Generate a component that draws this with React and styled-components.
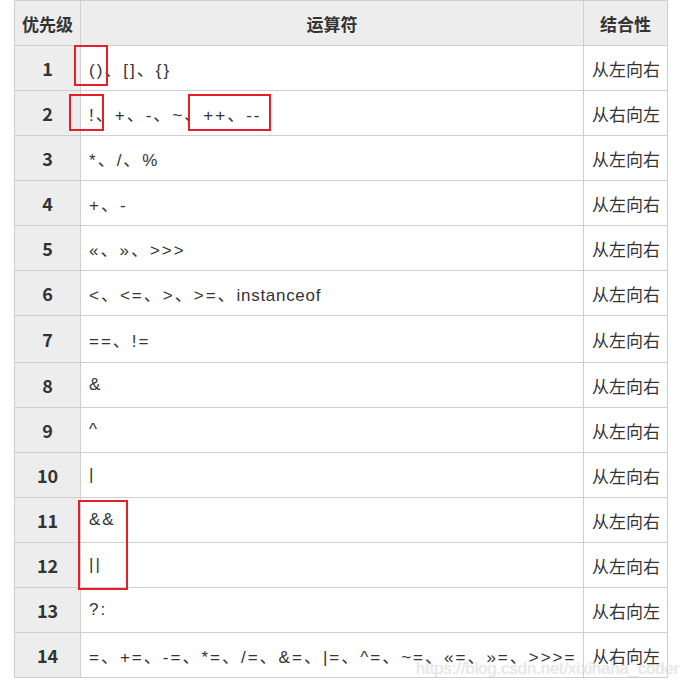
import React from 'react';
import styled, { createGlobalStyle } from 'styled-components';

const GlobalStyle = createGlobalStyle`
  html, body {
    margin: 0;
    padding: 0;
    background: #fff;
  }
  body {
    font-family: "Noto Sans CJK SC", "Noto Sans", sans-serif;
    color: #333;
  }
`;

const Page = styled.div`
  position: relative;
  width: 680px;
  height: 686px;
  padding-left: 14px;
  box-sizing: border-box;
  overflow: hidden;
`;

const Table = styled.table`
  border-collapse: collapse;
  width: 654px;
  table-layout: fixed;
  font-size: 17px;
`;

const HeadCell = styled.th`
  height: 44px;
  padding: 0;
  background: #ededed;
  border: 1px solid #cfcfcf;
  font-weight: bold;
  color: #333;
  text-align: center;
  width: ${p => p.w}px;
`;

const RankCell = styled.td`
  height: ${p => p.h - 1}px;
  padding: 0;
  background: #ededed;
  border: 1px solid #cfcfcf;
  font-weight: bold;
  font-size: 18px;
  color: #333;
  text-align: center;
`;

const OpCell = styled.td`
  height: ${p => p.h - 1}px;
  padding: 0 0 0 8px;
  border: 1px solid #cfcfcf;
  color: #333;
  font-family: "Liberation Sans", "Noto Sans CJK SC", sans-serif;
  letter-spacing: 2px;
  white-space: nowrap;
  overflow: visible;
`;

const Word = styled.span`
  letter-spacing: 0.7px;
`;

const AssocCell = styled.td`
  height: ${p => p.h - 1}px;
  padding: 0 0 0 8px;
  border: 1px solid #cfcfcf;
  color: #333;
  white-space: nowrap;
`;

const Mark = styled.div`
  position: absolute;
  left: ${p => p.x}px;
  top: ${p => p.y}px;
  width: ${p => p.w}px;
  height: ${p => p.h}px;
  border: 2px solid #e61e28;
  box-sizing: border-box;
  pointer-events: none;
`;

const Watermark = styled.div`
  position: absolute;
  left: 416px;
  top: 659px;
  font-family: "Liberation Sans", Arial, sans-serif;
  font-size: 16.5px;
  color: rgba(235, 235, 235, 0.75);
  text-shadow: 0 0 1px rgba(180, 180, 180, 0.5);
  white-space: nowrap;
`;

const rows = [
  ['1', ['()', '[]', '{}'], '从左向右'],
  ['2', ['!', '+', '-', '~', '++', '--'], '从右向左'],
  ['3', ['*', '/', '%'], '从左向右'],
  ['4', ['+', '-'], '从左向右'],
  ['5', ['«', '»', '>>>'], '从左向右'],
  ['6', ['<', '<=', '>', '>=', 'instanceof'], '从左向右'],
  ['7', ['==', '!='], '从左向右', 47],
  ['8', ['&'], '从左向右'],
  ['9', ['^'], '从左向右'],
  ['10', ['|'], '从左向右'],
  ['11', ['&&'], '从左向右'],
  ['12', ['||'], '从左向右'],
  ['13', ['?:'], '从右向左'],
  ['14', ['=', '+=', '-=', '*=', '/=', '&=', '|=', '^=', '~=', '«=', '»=', '>>>='], '从右向左'],
];

const marks = [
  { x: 74, y: 45, w: 34, h: 41 },
  { x: 69, y: 94, w: 35, h: 37 },
  { x: 188, y: 94, w: 83, h: 37 },
  { x: 78, y: 500, w: 50, h: 90 },
];

const OpList = ({ ops }) =>
  ops.map((op, i) => (
    <React.Fragment key={i}>
      {i > 0 && '、'}
      {/^[a-z]+$/.test(op) ? <Word>{op}</Word> : op}
    </React.Fragment>
  ));

export default function App() {
  return (
    <Page>
      <GlobalStyle />
      <Table>
        <thead>
          <tr>
            <HeadCell w={65}>优先级</HeadCell>
            <HeadCell w={502}>运算符</HeadCell>
            <HeadCell w={83}>结合性</HeadCell>
          </tr>
        </thead>
        <tbody>
          {rows.map(([rank, ops, assoc, h = 45]) => (
            <tr key={rank}>
              <RankCell h={h}>{rank}</RankCell>
              <OpCell h={h}>
                <OpList ops={ops} />
              </OpCell>
              <AssocCell h={h}>{assoc}</AssocCell>
            </tr>
          ))}
        </tbody>
      </Table>
      {marks.map((m, i) => (
        <Mark key={i} {...m} />
      ))}
      <Watermark>https://blog.csdn.net/xixihaha_coder</Watermark>
    </Page>
  );
}
